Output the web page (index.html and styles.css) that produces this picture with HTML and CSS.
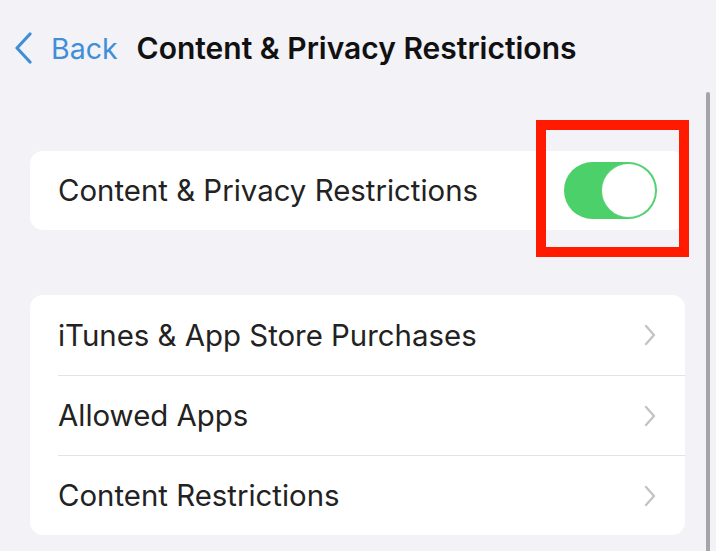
FILE: index.html
```html
<!DOCTYPE html>
<html lang="en">
<head>
<meta charset="utf-8">
<link rel="stylesheet" href="styles.css">
</head>
<body>
<div class="screen">
  <header class="nav">
    <a class="back">
      <svg class="back-chevron" width="20" height="32" viewBox="0 0 20 32"><path d="M17 2 L4 16 L17 30" fill="none" stroke="#3f8fd8" stroke-width="3.2" stroke-linecap="round" stroke-linejoin="round"/></svg>
      <span class="back-label">Back</span>
    </a>
    <h1 class="title">Content &amp; Privacy Restrictions</h1>
  </header>
  <main class="content">
    <section class="card">
      <div class="row">
        <span class="row-label">Content &amp; Privacy Restrictions</span>
        <span class="toggle"><span class="knob"></span></span>
      </div>
    </section>
    <section class="card card-list">
      <div class="row">
        <span class="row-label">iTunes &amp; App Store Purchases</span>
        <svg class="chev" width="14" height="22" viewBox="0 0 14 22"><path d="M3 2 L11 11 L3 20" fill="none" stroke="#c4c4c8" stroke-width="2.4" stroke-linecap="round" stroke-linejoin="round"/></svg>
      </div>
      <div class="row">
        <span class="row-label">Allowed Apps</span>
        <svg class="chev" width="14" height="22" viewBox="0 0 14 22"><path d="M3 2 L11 11 L3 20" fill="none" stroke="#c4c4c8" stroke-width="2.4" stroke-linecap="round" stroke-linejoin="round"/></svg>
      </div>
      <div class="row">
        <span class="row-label">Content Restrictions</span>
        <svg class="chev" width="14" height="22" viewBox="0 0 14 22"><path d="M3 2 L11 11 L3 20" fill="none" stroke="#c4c4c8" stroke-width="2.4" stroke-linecap="round" stroke-linejoin="round"/></svg>
      </div>
    </section>
  </main>
  <div class="highlight"></div>
  <div class="scrollbar"></div>
</div>
</body>
</html>
```

FILE: styles.css
```css
* { box-sizing: border-box; }
html, body { margin: 0; padding: 0; }
body {
  background: #f2f2f7;
  font-family: Inter, "Noto Sans", "Liberation Sans", sans-serif;
  color: #1c1c1e;
}
.screen {
  position: relative;
  width: 716px;
  height: 551px;
  overflow: hidden;
}
.nav {
  height: 96px;
  display: flex;
  align-items: center;
  padding-left: 13px;
}
.back {
  display: flex;
  align-items: center;
  color: #3f8fd8;
}
.back-chevron { display: block; }
.back-label {
  font-size: 28.5px;
  margin-left: 18px;
}
.title {
  margin: 0 0 0 19px;
  font-size: 30px;
  font-weight: 600;
  color: #111;
}
.content {
  padding: 55px 31px 0 30px;
  display: flex;
  flex-direction: column;
  gap: 65px;
}
.card {
  background: #fff;
  border-radius: 13px;
}
.row {
  height: 79px;
  display: flex;
  align-items: center;
  justify-content: space-between;
  padding: 0 28px;
}
.card-list .row { height: 80px; }
.card-list .row + .row {
  border-top: 1px solid #e3e3e7;
  margin-left: 28px;
  padding-left: 0;
}
.row-label {
  font-size: 29.4px;
  color: #222;
}
.toggle {
  width: 93px;
  height: 57px;
  border-radius: 29px;
  background: #4cd06a;
  display: flex;
  justify-content: flex-end;
  align-items: center;
  padding: 2px;
}
.knob {
  width: 53px;
  height: 53px;
  border-radius: 50%;
  background: #fff;
  box-shadow: 0 0 0 1px #5fd27a;
}
.chev { display: block; }
.highlight {
  position: absolute;
  left: 536px;
  top: 120px;
  width: 153px;
  height: 137px;
  border: 10px solid #ff1a00;
}
.scrollbar {
  position: absolute;
  left: 706px;
  top: 92px;
  width: 4px;
  height: 470px;
  border-radius: 2px;
  background: #a4a4a9;
}
```
